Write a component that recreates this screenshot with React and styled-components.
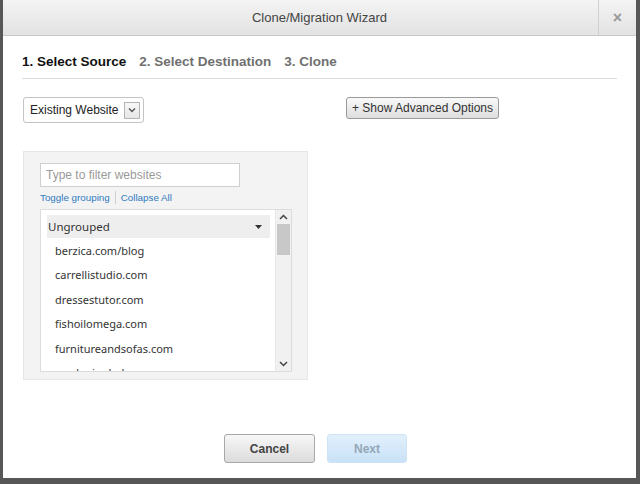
import React from "react";
import styled, { createGlobalStyle } from "styled-components";

const Global = createGlobalStyle`
  html, body { margin: 0; padding: 0; background: #555; }
  body { font-family: "Liberation Sans", Arial, sans-serif; }
  * { box-sizing: border-box; }
`;

const Frame = styled.div`
  width: 640px;
  height: 484px;
  background: #575757;
  padding: 0 4px 6px 3px;
  display: flex;
`;

const Dialog = styled.div`
  flex: 1;
  background: #fff;
  display: flex;
  flex-direction: column;
`;

const Header = styled.div`
  height: 36px;
  display: flex;
  background: linear-gradient(#f4f4f4, #e2e2e2);
  border-bottom: 1px solid #c8c8c8;
`;

const Title = styled.div`
  flex: 1;
  display: flex;
  align-items: center;
  justify-content: center;
  padding-left: 38px;
  font-size: 13px;
  color: #444;
`;

const Close = styled.div`
  width: 38px;
  border-left: 1px solid #d0d0d0;
  display: flex;
  align-items: center;
  justify-content: center;
  color: #999;
  font-size: 16px;
  font-weight: bold;
`;

const Body = styled.div`
  flex: 1;
  padding: 18px 19px 0 19px;
  display: flex;
  flex-direction: column;
`;

const Steps = styled.div`
  display: flex;
  gap: 13px;
  padding: 0 0 9px 0;
  border-bottom: 1px solid #dcdcdc;
`;

const Step = styled.span`
  font-size: 13.5px;
  font-weight: bold;
  color: ${(p) => (p.$active ? "#111" : "#707070")};
`;

const Controls = styled.div`
  display: flex;
  align-items: flex-start;
  margin-top: 18px;
`;

const Select = styled.div`
  width: 121px;
  height: 26px;
  border: 1px solid #c4c4c4;
  border-radius: 3px;
  display: flex;
  align-items: center;
  justify-content: space-between;
  padding: 0 3px 0 6px;
  font-size: 12px;
  color: #222;
  white-space: nowrap;
  margin-left: 1px;
`;

const SelectBtn = styled.div`
  width: 16px;
  height: 17px;
  border: 1px solid #b5b5b5;
  background: linear-gradient(#f8f8f8, #e6e6e6);
  display: flex;
  align-items: center;
  justify-content: center;
`;

const AdvBtn = styled.button`
  margin-left: 202px;
  height: 22px;
  width: 153px;
  border: 1px solid #9a9a9a;
  border-radius: 3px;
  background: linear-gradient(#f9f9f9, #dedede);
  font-family: "Liberation Sans", Arial, sans-serif;
  font-size: 12px;
  color: #333;
  padding: 0;
`;

const Panel = styled.div`
  margin-top: 28px;
  margin-left: 1px;
  width: 285px;
  height: 229px;
  background: #f3f3f3;
  border: 1px solid #e6e6e6;
  padding: 11px 16px 0 16px;
  display: flex;
  flex-direction: column;
`;

const Filter = styled.div`
  width: 200px;
  height: 24px;
  border: 1px solid #cfcfcf;
  background: #fff;
  display: flex;
  align-items: center;
  padding-left: 5px;
  font-size: 12px;
  color: #9a9a9a;
`;

const Links = styled.div`
  display: flex;
  align-items: center;
  margin-top: 3px;
  height: 14px;
  font-family: "Liberation Sans", Arial, sans-serif;
  font-size: 9.8px;
  color: #2f7bbf;
`;

const Sep = styled.span`
  width: 1px;
  height: 13px;
  background: #cfcfcf;
  margin: 0 5px;
`;

const ListBox = styled.div`
  margin-top: 5px;
  width: 252px;
  height: 163px;
  border: 1px solid #dcdcdc;
  background: #fff;
  display: flex;
  overflow: hidden;
`;

const List = styled.div`
  flex: 1;
  padding: 5px 5px 0 6px;
  display: flex;
  flex-direction: column;
  font-family: "Noto Sans", "Open Sans", sans-serif;
  font-size: 11px;
  color: #333;
`;

const GroupRow = styled.div`
  height: 23px;
  flex-shrink: 0;
  background: #eeeeee;
  display: flex;
  align-items: center;
  justify-content: space-between;
  padding: 0 8px 0 1px;
  font-size: 11.5px;
`;

const Item = styled.div`
  height: 24.5px;
  display: flex;
  align-items: center;
  padding-left: 8px;
  flex-shrink: 0;
`;

const Scrollbar = styled.div`
  width: 16px;
  background: #f1f1f1;
  border-left: 1px solid #e8e8e8;
  display: flex;
  flex-direction: column;
  align-items: center;
`;

const Arrow = styled.div`
  height: 14px;
  display: flex;
  align-items: center;
  justify-content: center;
`;

const Thumb = styled.div`
  width: 13px;
  height: 31px;
  background: #c8c8c8;
`;

const Track = styled.div`
  flex: 1;
`;

const Footer = styled.div`
  margin-top: auto;
  height: 44px;
  display: flex;
  align-items: flex-start;
  justify-content: center;
  gap: 12px;
  padding-right: 8px;
`;

const FootBtn = styled.button`
  width: ${(p) => p.$w}px;
  height: 29px;
  border-radius: 3px;
  font-family: "Liberation Sans", Arial, sans-serif;
  font-size: 12px;
  font-weight: bold;
  padding: 0;
  border: 1px solid ${(p) => (p.$primary ? "#cfe3f5" : "#a8a8a8")};
  background: ${(p) =>
    p.$primary
      ? "linear-gradient(#e1effb, #c9e2f7)"
      : "linear-gradient(#f7f7f7, #dcdcdc)"};
  color: ${(p) => (p.$primary ? "#93a7b8" : "#444")};
`;

const sites = [
  "berzica.com/blog",
  "carrellistudio.com",
  "dressestutor.com",
  "fishoilomega.com",
  "furnitureandsofas.com",
  "gardeninghelp.com",
];

export default function App() {
  return (
    <>
      <Global />
      <Frame>
        <Dialog>
          <Header>
            <Title>Clone/Migration Wizard</Title>
            <Close>×</Close>
          </Header>
          <Body>
            <Steps>
              <Step $active>1. Select Source</Step>
              <Step>2. Select Destination</Step>
              <Step>3. Clone</Step>
            </Steps>
            <Controls>
              <Select>
                <span>Existing Website</span>
                <SelectBtn>
                  <svg width="8" height="6" viewBox="0 0 8 6">
                    <path d="M1 1.5 L4 4.5 L7 1.5" fill="none" stroke="#555" strokeWidth="1.4" />
                  </svg>
                </SelectBtn>
              </Select>
              <AdvBtn>+ Show Advanced Options</AdvBtn>
            </Controls>
            <Panel>
              <Filter>Type to filter websites</Filter>
              <Links>
                <span>Toggle grouping</span>
                <Sep />
                <span>Collapse All</span>
              </Links>
              <ListBox>
                <List>
                  <GroupRow>
                    <span>Ungrouped</span>
                    <svg width="7" height="4" viewBox="0 0 7 4">
                      <path d="M0 0 H7 L3.5 4 Z" fill="#333" />
                    </svg>
                  </GroupRow>
                  {sites.map((s) => (
                    <Item key={s}>{s}</Item>
                  ))}
                </List>
                <Scrollbar>
                  <Arrow>
                    <svg width="9" height="6" viewBox="0 0 9 6">
                      <path d="M1 5 L4.5 1.5 L8 5" fill="none" stroke="#444" strokeWidth="1.5" />
                    </svg>
                  </Arrow>
                  <Thumb />
                  <Track />
                  <Arrow>
                    <svg width="9" height="6" viewBox="0 0 9 6">
                      <path d="M1 1 L4.5 4.5 L8 1" fill="none" stroke="#444" strokeWidth="1.5" />
                    </svg>
                  </Arrow>
                </Scrollbar>
              </ListBox>
            </Panel>
            <Footer>
              <FootBtn $w={91}>Cancel</FootBtn>
              <FootBtn $w={80} $primary>Next</FootBtn>
            </Footer>
          </Body>
        </Dialog>
      </Frame>
    </>
  );
}
